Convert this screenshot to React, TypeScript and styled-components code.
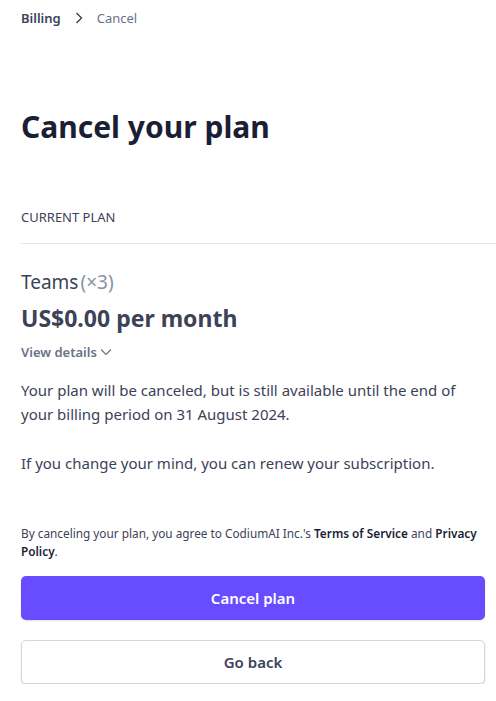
import React from 'react';
import styled, { createGlobalStyle } from 'styled-components';

const GlobalStyle = createGlobalStyle`
  body {
    margin: 0;
    background: #ffffff;
    font-family: "Noto Sans", "Open Sans", sans-serif;
    -webkit-font-smoothing: antialiased;
  }
`;

const Page = styled.div`
  padding: 0 11px 0 21px;
  display: flex;
  flex-direction: column;
`;

const Breadcrumb = styled.nav`
  display: flex;
  align-items: center;
  height: 36px;
  font-size: 13px;
`;

const CrumbLink = styled.span<{ $current?: boolean }>`
  color: ${p => (p.$current ? '#697386' : '#3c4257')};
  font-weight: ${p => (p.$current ? 400 : 600)};
`;

const Chevron = styled.svg`
  margin: 0 14px 0 14px;
`;

const Title = styled.h1`
  margin: 69px 0 0;
  font-size: 30px;
  line-height: 44px;
  font-weight: 700;
  color: #1a1f36;
`;

const SectionLabel = styled.div`
  margin-top: 58px;
  font-size: 13px;
  line-height: 20px;
  color: #3c4257;
  text-transform: uppercase;
  padding-bottom: 16px;
  border-bottom: 1px solid #e3e8ee;
  margin-right: -11px;
`;

const PlanName = styled.div`
  margin-top: 24px;
  font-size: 19px;
  line-height: 28px;
  color: #3c4257;
`;

const Qty = styled.span`
  color: #8792a2;
  margin-left: 2px;
`;

const Price = styled.div`
  margin-top: 6px;
  font-size: 23px;
  line-height: 32px;
  font-weight: 700;
  color: #3c4257;
`;

const Details = styled.div`
  margin-top: 8px;
  display: flex;
  align-items: center;
  gap: 3px;
  font-size: 13px;
  line-height: 20px;
  font-weight: 600;
  color: #697386;
`;

const Body = styled.p<{ $gap?: number }>`
  margin: ${p => p.$gap ?? 16}px 0 0;
  font-size: 15px;
  line-height: 24px;
  color: #3c4257;
`;

const Legal = styled.p`
  margin: 49px 0 0;
  font-size: 11.8px;
  line-height: 18px;
  color: #3c4257;

  strong {
    font-weight: 600;
    color: #1a1f36;
  }
`;

const Button = styled.button<{ $primary?: boolean }>`
  display: block;
  width: 100%;
  height: 44px;
  border-radius: 5px;
  font-family: inherit;
  font-size: 15px;
  font-weight: 600;
  cursor: pointer;
  border: ${p => (p.$primary ? 'none' : '1px solid #d5d9de')};
  background: ${p => (p.$primary ? '#684cff' : '#ffffff')};
  color: ${p => (p.$primary ? '#ffffff' : '#3c4257')};
  box-shadow: ${p =>
    p.$primary ? '0 1px 2px rgba(0,0,0,0.12)' : '0 1px 2px rgba(0,0,0,0.14)'};
`;

const Actions = styled.div`
  margin-top: 16px;
  display: flex;
  flex-direction: column;
  gap: 20px;
`;

export default function App() {
  return (
    <>
      <GlobalStyle />
      <Page>
        <Breadcrumb>
          <CrumbLink>Billing</CrumbLink>
          <Chevron width="8" height="12" viewBox="0 0 8 12" fill="none">
            <path d="M1.5 1L6.5 6L1.5 11" stroke="#3c4257" strokeWidth="1.4" />
          </Chevron>
          <CrumbLink $current>Cancel</CrumbLink>
        </Breadcrumb>

        <Title>Cancel your plan</Title>

        <SectionLabel>Current plan</SectionLabel>

        <PlanName>
          Teams<Qty>(×3)</Qty>
        </PlanName>
        <Price>US$0.00 per month</Price>
        <Details>
          View details
          <svg width="12" height="8" viewBox="0 0 12 8" fill="none">
            <path d="M1 1.5L6 6.5L11 1.5" stroke="#697386" strokeWidth="1.2" />
          </svg>
        </Details>

        <Body>
          Your plan will be canceled, but is still available until the end of your
          billing period on 31 August 2024.
        </Body>
        <Body $gap={25}>
          If you change your mind, you can renew your subscription.
        </Body>

        <Legal>
          By canceling your plan, you agree to CodiumAI Inc.'s <strong>Terms of Service</strong> and{' '}
          <strong>Privacy</strong> <strong>Policy</strong>.
        </Legal>

        <Actions>
          <Button $primary>Cancel plan</Button>
          <Button>Go back</Button>
        </Actions>
      </Page>
    </>
  );
}
